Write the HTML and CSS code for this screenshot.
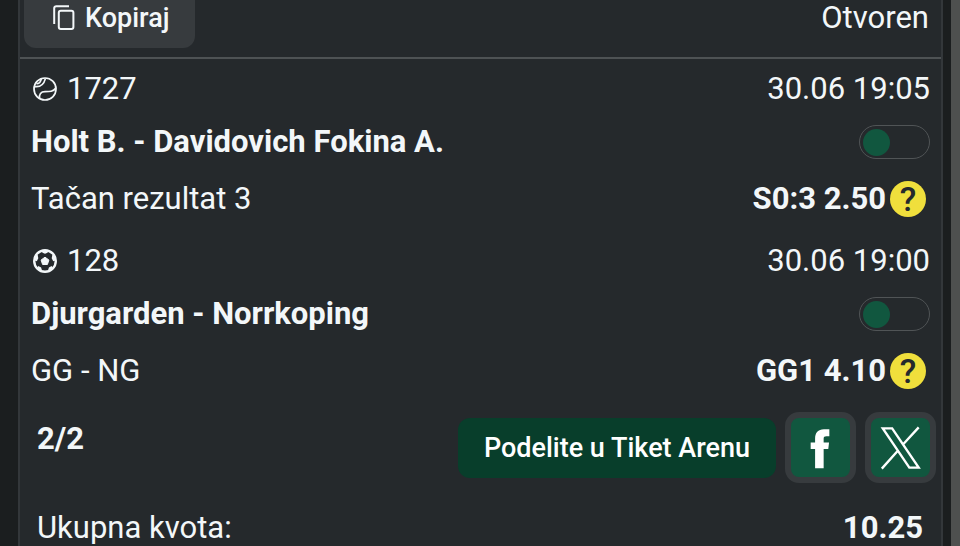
FILE: index.html
```html
<!DOCTYPE html>
<html lang="sr-Latn">
<head>
<meta charset="utf-8">
<meta name="viewport" content="width=device-width, initial-scale=1">
<title>Tiket</title>
<link rel="stylesheet" href="styles.css">
</head>
<body>
<main class="ticket">
  <header class="ticket-head">
    <button class="copy" type="button">
      <svg class="copy-icon" viewBox="0 0 22 26" aria-hidden="true"><path d="M1.2 19V3.2a2 2 0 0 1 2-2H16"/><rect x="5.8" y="5.8" width="14.6" height="18.2" rx="2"/></svg>
      Kopiraj
    </button>
    <span class="status">Otvoren</span>
  </header>

  <section class="match">
    <div class="row row-code">
      <span class="code">
        <svg class="sport" viewBox="0 0 24 24" aria-hidden="true"><g fill="none" stroke="currentColor" stroke-width="1.700"><circle cx="12" cy="12" r="11"/><path d="M3.500 6.500c2.500.5 4-.8 4.800-4.600"/><path d="M1.800 9.600c4.800.6 9-2 10.600-8"/><path d="M6.700 21.700c-1-4.700 1.300-7 5.300-7 4.500 0 8.500 0 10.800-3.700"/></g></svg>
        1727
      </span>
      <time datetime="06-30T19:05">30.06 19:05</time>
    </div>
    <div class="row row-teams">
      <label for="match-1">Holt B. - Davidovich Fokina A.</label>
      <input class="toggle" id="match-1" type="checkbox">
    </div>
    <div class="row row-bet">
      <span>Tačan rezultat 3</span>
      <span class="odds">S0:3 2.50 <button class="help" type="button">?</button></span>
    </div>
  </section>

  <section class="match">
    <div class="row row-code">
      <span class="code">
        <svg class="sport" viewBox="0 0 24 24" aria-hidden="true"><circle cx="12" cy="12" r="10.800" fill="none" stroke="currentColor" stroke-width="2.400"/><path fill="currentColor" stroke="currentColor" stroke-width="1" stroke-linejoin="round" d="M12 8.200l3.900 2.800-1.500 4.500H9.600L8.100 11z"/><path fill="currentColor" d="M8.500 1.500h7l-1 2.300L12 4.800 9.500 3.800zM1.500 11.500V7l3.200-1 .6 3.200-1.500 3zM22.500 11.500V7l-3.200-1-.6 3.200 1.500 3zM4 19.500l1.300-2.600 2.800 1.500 1 3.400zM20 19.500l-1.300-2.600-2.800 1.500-1 3.400z"/></svg>
        128
      </span>
      <time datetime="06-30T19:00">30.06 19:00</time>
    </div>
    <div class="row row-teams">
      <label for="match-2">Djurgarden - Norrkoping</label>
      <input class="toggle" id="match-2" type="checkbox">
    </div>
    <div class="row row-bet">
      <span>GG - NG</span>
      <span class="odds">GG1 4.10 <button class="help" type="button">?</button></span>
    </div>
  </section>

  <section class="share">
    <strong class="count">2/2</strong>
    <div class="actions">
      <button class="arena" type="button">Podelite u Tiket Arenu</button>
      <button class="social" type="button" aria-label="Facebook">
        <svg viewBox="0 0 60 60" aria-hidden="true"><path fill="currentColor" d="M24.500 51V31.500H20V25h4.500v-4c0-6 3-9.500 9-9.500h5.500V18.500h-3c-2 0-2.800.8-2.800 2.500V25h5.500l-.8 6.500h-4.700V51z"/></svg>
      </button>
      <button class="social" type="button" aria-label="X">
        <svg viewBox="0 0 60 60" aria-hidden="true"><path fill="none" stroke="currentColor" stroke-width="2.400" d="M12 10.500h9.500L48.500 50.500h-9.500zM48.500 9.500L32.500 27M27.500 33L11 51.500"/></svg>
      </button>
    </div>
  </section>

  <footer class="total">
    <span>Ukupna kvota:</span>
    <strong>10.25</strong>
  </footer>
</main>
<div class="scroll-track"></div>
</body>
</html>
```
FILE: styles.css
```css
* {
  box-sizing: border-box;
}

body {
  display: flex;
  height: 100vh;
  margin: 0;
  overflow: hidden;
  background: #1b1e1f;
  color: #f3f7f9;
  font-family: Roboto, "Noto Sans", sans-serif;
  font-size: 31px;
  line-height: 40px;
}

button {
  margin: 0;
  padding: 0;
  border: 0;
  color: inherit;
  font: inherit;
}

/* The card starts above the fold, as if scrolled */
.ticket {
  flex: 1;
  align-self: flex-start;
  margin: -12px 8px 0 18px;
  border: solid #33373a;
  border-width: 0 2px;
  background: #25292c;
}

.ticket-head {
  display: flex;
  align-items: center;
  justify-content: space-between;
  margin-bottom: 1px;
  padding: 0 12px 9px 4px;
  border-bottom: 2px solid #4e5254;
}

.copy {
  display: flex;
  align-items: center;
  gap: 10px;
  height: 60px;
  padding: 0 26px 0 29px;
  border-radius: 12px;
  background: #373b3e;
  font-size: 27px;
  font-weight: 500;
}

.copy-icon {
  width: 22px;
  height: 26px;
  fill: none;
  stroke: currentColor;
  stroke-width: 2;
}

.match {
  padding: 0 11px;
}

.row {
  display: flex;
  align-items: center;
  justify-content: space-between;
}

.row-code {
  height: 58px;
}

.row-teams {
  height: 48px;
  font-weight: 700;
}

.row-bet {
  height: 66px;
}

.code {
  display: flex;
  align-items: center;
  gap: 10px;
}

.sport {
  width: 24px;
  height: 24px;
  margin-left: 2px;
}

.toggle {
  display: flex;
  align-items: center;
  appearance: none;
  width: 71px;
  height: 34px;
  margin: 0;
  padding: 0 3px;
  border: 1px solid #505456;
  border-radius: 17px;
}

.toggle::before {
  content: "";
  width: 27px;
  height: 27px;
  border-radius: 50%;
  background: #11573f;
}

.toggle:checked {
  justify-content: flex-end;
}

.odds {
  display: flex;
  align-items: center;
  gap: 4px;
  font-weight: 700;
}

.help {
  width: 36px;
  height: 36px;
  margin-right: 4px;
  border-radius: 50%;
  background: #f0df3c;
  color: #25292c;
  font-size: 34px;
  font-weight: 500;
  line-height: 36px;
}

.share {
  display: flex;
  justify-content: space-between;
  padding: 8px 5px 14px 17px;
}

.count {
  line-height: 54px;
}

.actions {
  display: flex;
  align-items: center;
  gap: 9px;
}

.arena {
  height: 60px;
  padding: 0 26px;
  border-radius: 12px;
  background: #083e2b;
  color: #fff;
  font-size: 27px;
  font-weight: 500;
}

.social {
  width: 71px;
  height: 71px;
  border: 6px solid #373b3e;
  border-radius: 14px;
  background: #11573f;
  color: #fff;
}

.social svg {
  display: block;
  width: 100%;
}

.total {
  display: flex;
  justify-content: space-between;
  padding: 0 18px 0 17px;
  line-height: 62px;
}

.scroll-track {
  width: 9px;
  background: #4e504f;
}
```
